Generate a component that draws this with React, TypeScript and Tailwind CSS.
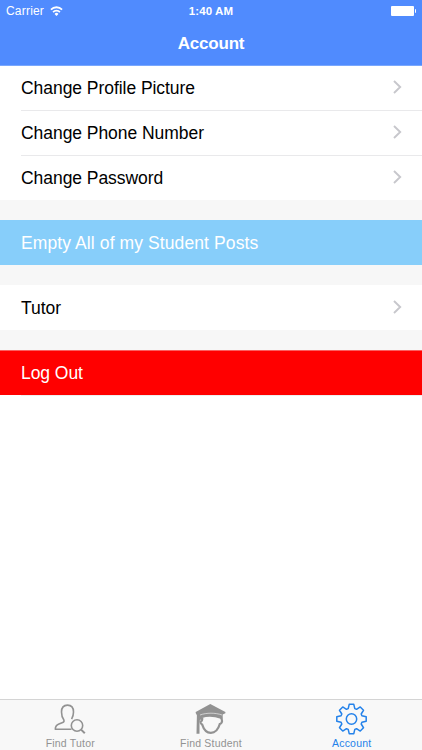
import type { ReactNode } from 'react';

const FONT = "font-['Liberation_Sans',Arial,sans-serif]";

const gearPoints = Array.from({ length: 8 }, (_, i) => {
  const a = (i * Math.PI) / 4;
  return [[-3.3, -10.4], [-2.3, -14.7], [2.3, -14.7], [3.3, -10.4]]
    .map(([x, y]) => `${(x * Math.cos(a) - y * Math.sin(a)).toFixed(2)},${(x * Math.sin(a) + y * Math.cos(a)).toFixed(2)}`)
    .join(' ');
}).join(' ');

function WifiIcon() {
  return (
    <svg className="-mt-px h-[10px] w-[13px]" viewBox="0 0 14 10" preserveAspectRatio="none" fill="none" stroke="white" strokeWidth="1.9">
      <path d="M1 3.700a8.500 8.500 0 0 1 12 0" />
      <path d="M3.300 6.200a5.200 5.200 0 0 1 7.400 0" />
      <path d="M7 10 4.900 7.900a3 3 0 0 1 4.200 0Z" fill="white" stroke="none" />
    </svg>
  );
}

function Chevron() {
  return (
    <svg className="mb-px h-[14px] w-[9px]" viewBox="0 0 9 14" fill="none" stroke="#c7c7cc" strokeWidth="1.9">
      <path d="M1 1 7.200 7 1 13" />
    </svg>
  );
}

function TutorIcon() {
  return (
    <svg className="h-8 w-8" viewBox="0 0 32 32" fill="none" stroke="#929292" strokeWidth="1.6" strokeLinejoin="round">
      <path d="M17.500 26.300H1.300c0-3 1-4.200 3.600-5.200l3.800-1.500c1.200-.5 1.500-1.400 1.200-2.500C8.300 15 7.500 12.500 7.500 9c0-4.200 2.200-6.900 6-6.900s6 2.700 6 6.900c0 2.700-.7 4.900-1.900 7.200" />
      <circle cx="23" cy="22.500" r="5.700" />
      <path d="m27.100 26.600 3.700 3.700" strokeWidth="2" />
    </svg>
  );
}

function StudentIcon() {
  return (
    <svg className="h-8 w-8" viewBox="0 0 32 32">
      {/* cap */}
      <path d="M15.300 1 30.400 8.900v1.300L27.700 11.600v4.200h-2C19 13.200 12.500 13 7 15l-2.500 3v12.700H1.500L1.900 12.300.7 10V8.900L15.300 1Z" fill="#929292" />
      <path d="M5 12c6.500-2.400 15.300-2.400 22 0" fill="none" stroke="#f8f8f8" strokeWidth=".6" />
      {/* face */}
      <path
        d="M7.200 14.500c.2 2.200-.2 3.600-1.800 4.400.2 1.500.6 2.300 1.800 2.700 1.500 4.700 4.500 8.200 8.600 8.200s7.500-3.500 9-8.800c1.700-.5 2.600-2.300 2.100-4l-.8-2.500"
        fill="none"
        stroke="#929292"
        strokeWidth="2.200"
      />
    </svg>
  );
}

function GearIcon() {
  return (
    <svg className="h-8 w-8" viewBox="-15.500 -16 32 32" fill="none" stroke="#2482ea" strokeWidth="1.5" strokeLinejoin="round">
      <polygon points={gearPoints} />
      <circle r="5.200" />
    </svg>
  );
}

function Row({ label, divider = false }: { label: string; divider?: boolean }) {
  return (
    <div className="relative flex h-[45px] items-center justify-between bg-white pr-5 pl-[21px] text-black">
      <span className="pt-px">{label}</span>
      <Chevron />
      {divider && <div className="absolute right-0 -bottom-px left-[21px] z-10 h-px bg-[#e9e9eb]" />}
    </div>
  );
}

function Tab({ icon, label, active = false }: { icon: ReactNode; label: string; active?: boolean }) {
  return (
    <div className={`flex flex-1 flex-col items-center pt-[3px] ${active ? 'text-[#2482ea]' : 'text-[#929292]'}`}>
      {icon}
      <span className="mt-[2px] text-[10.500px] leading-[12px] tracking-[0.200px]">{label}</span>
    </div>
  );
}

export default function App() {
  return (
    <div className={`flex h-[750px] w-[422px] flex-col bg-white ${FONT}`}>
      <header className="relative z-20 flex h-[66px] flex-col border-b border-[#79a7fd] bg-[#508bfe] text-white">
        <div className="grid h-[22px] grid-cols-3 items-center px-[6px] text-[12px]">
          <div className="flex items-center gap-[6px]">
            <span className="tracking-[0.200px]">Carrier</span>
            <WifiIcon />
          </div>
          <span className="pt-px text-center text-[11.500px] font-bold tracking-[0.100px]">1:40 AM</span>
          <div className="flex items-center justify-end">
            <div className="h-[10px] w-[23px] rounded-[1px] bg-white" />
            <div className="ml-px h-1 w-px rounded-r-sm bg-white" />
          </div>
        </div>
        <h1 className="flex h-[43px] items-center justify-center text-[17px] font-bold tracking-[-0.200px]">Account</h1>
      </header>

      {/* first row tucks one pixel under the header's hairline */}
      <main className="-mt-px flex flex-1 flex-col text-[17.500px] tracking-[-0.050px]">
        <Row divider label="Change Profile Picture" />
        <Row divider label="Change Phone Number" />
        <Row label="Change Password" />
        <div className="h-5 bg-[#f7f7f7]" />
        <div className="flex h-[45px] items-center bg-[#87cefa] pt-px pl-[21px] tracking-[0.100px] text-white">Empty All of my Student Posts</div>
        <div className="h-5 bg-[#f7f7f7]" />
        <Row label="Tutor" />
        <div className="h-5 bg-[#f7f7f7]" />
        <div className="flex h-[45px] items-center border-t border-[#fa6060] bg-[#ff0000] pl-[21px] text-white">Log Out</div>
        <div className="ml-[21px] h-px bg-[#eeeeee]" />
      </main>

      <nav className="flex h-[51px] border-t border-[#d4d4d4] bg-[#f8f8f8]">
        <Tab icon={<TutorIcon />} label="Find Tutor" />
        <Tab icon={<StudentIcon />} label="Find Student" />
        <Tab icon={<GearIcon />} label="Account" active />
      </nav>
    </div>
  );
}
